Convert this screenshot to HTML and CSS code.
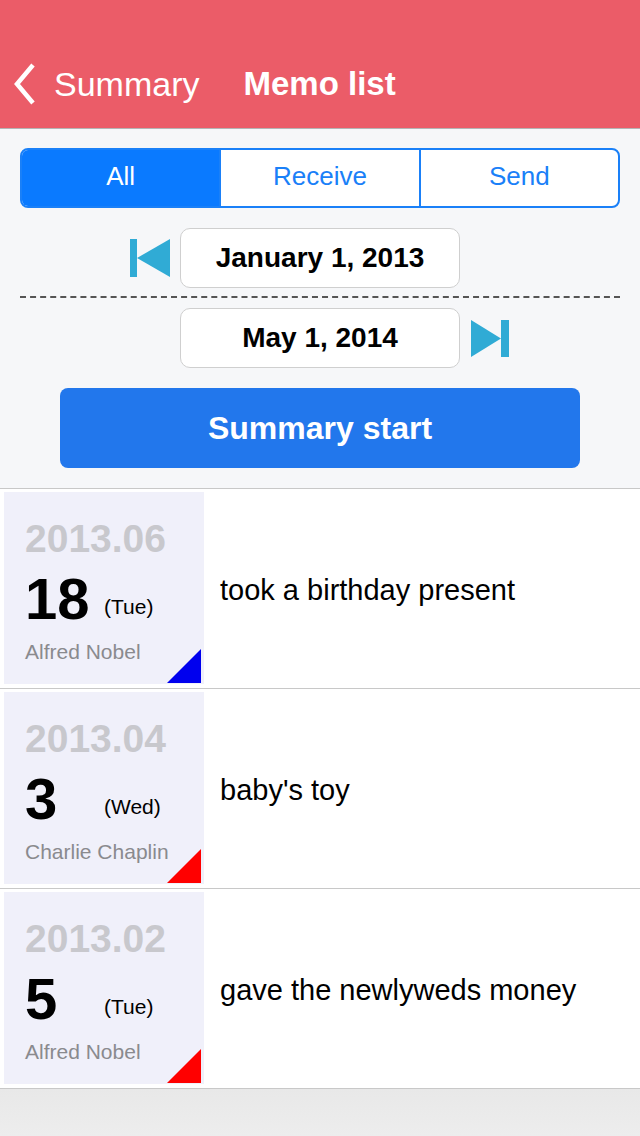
FILE: index.html
```html
<!DOCTYPE html>
<html lang="en">
<head>
    <meta charset="UTF-8">
    <meta name="viewport" content="width=device-width, initial-scale=1.0">
    <title>Memo list</title>
    <link rel="stylesheet" href="styles.css">
</head>
<body>
    <div class="screen">
        <header class="navbar">
            <div class="back">
                <svg class="chevron" width="22" height="42" viewBox="0 0 22 42">
                    <polyline points="19,2 3,21 19,40" fill="none" stroke="#fff" stroke-width="4.5"/>
                </svg>
                <span>Summary</span>
            </div>
            <h1>Memo list</h1>
        </header>

        <section class="filters">
            <div class="segmented">
                <div class="segment active">All</div>
                <div class="segment">Receive</div>
                <div class="segment">Send</div>
            </div>

            <div class="date-row">
                <svg class="skip" width="40" height="38" viewBox="0 0 40 38">
                    <rect x="0" y="0" width="7" height="38" fill="#30abd5"/>
                    <polygon points="40,0 7,19 40,38" fill="#30abd5"/>
                </svg>
                <div class="date-box">January 1, 2013</div>
                <span></span>
            </div>

            <div class="dashed"></div>

            <div class="date-row">
                <span></span>
                <div class="date-box">May 1, 2014</div>
                <svg class="skip right" width="38" height="37" viewBox="0 0 38 37">
                    <polygon points="0,0 30,18.5 0,37" fill="#30abd5"/>
                    <rect x="30" y="0" width="8" height="37" fill="#30abd5"/>
                </svg>
            </div>

            <button class="start">Summary start</button>
        </section>

        <ul class="memos">
            <li class="memo">
                <div class="card">
                    <div class="month">2013.06</div>
                    <div class="day"><span class="num">18</span><span class="wday">(Tue)</span></div>
                    <div class="who">Alfred Nobel</div>
                    <span class="corner blue"></span>
                </div>
                <div class="text">took a birthday present</div>
            </li>
            <li class="memo">
                <div class="card">
                    <div class="month">2013.04</div>
                    <div class="day"><span class="num">3</span><span class="wday">(Wed)</span></div>
                    <div class="who">Charlie Chaplin</div>
                    <span class="corner red"></span>
                </div>
                <div class="text">baby's toy</div>
            </li>
            <li class="memo">
                <div class="card">
                    <div class="month">2013.02</div>
                    <div class="day"><span class="num">5</span><span class="wday">(Tue)</span></div>
                    <div class="who">Alfred Nobel</div>
                    <span class="corner red"></span>
                </div>
                <div class="text">gave the newlyweds money</div>
            </li>
        </ul>
        <div class="footer"></div>
    </div>
</body>
</html>
```

FILE: styles.css
```css
body {
    margin: 0;
    font-family: 'Liberation Sans', Arial, sans-serif;
    background: #ececec;
}
.screen {
    width: 640px;
    height: 1136px;
    display: flex;
    flex-direction: column;
    overflow: hidden;
}
.navbar {
    height: 88px;
    padding-top: 40px;
    background-color: #eb5c68;
    border-bottom: 1px solid #b4b4b4;
    display: flex;
    align-items: center;
    color: #fff;
}
.back {
    display: flex;
    align-items: center;
    font-size: 34px;
    margin-left: 14px;
}
.chevron {
    margin-right: 18px;
}
h1 {
    margin: 0 0 0 44px;
    font-size: 33px;
    font-weight: bold;
}
.filters {
    background-color: #f6f7f9;
    padding: 19px 20px 20px;
    display: flex;
    flex-direction: column;
    border-bottom: 1px solid #c8c8c8;
}
.segmented {
    display: flex;
    height: 60px;
    border: 2px solid #1a80f8;
    border-radius: 8px;
    box-sizing: border-box;
    overflow: hidden;
    background: #fff;
}
.segment {
    flex: 1;
    display: flex;
    align-items: center;
    justify-content: center;
    padding-bottom: 3px;
    font-size: 26px;
    color: #1a80f8;
}
.segment + .segment {
    border-left: 2px solid #1a80f8;
}
.segment.active {
    background-color: #0a7aff;
    color: #fff;
}
.date-row {
    display: grid;
    grid-template-columns: 1fr 280px 1fr;
    align-items: center;
    margin-top: 20px;
}
.date-row .skip {
    justify-self: end;
    margin-right: 10px;
}
.date-row .skip.right {
    justify-self: start;
    margin-right: 0;
    margin-left: 11px;
}
.date-box {
    height: 60px;
    box-sizing: border-box;
    border: 1px solid #cfcfcf;
    border-radius: 10px;
    background: #fff;
    display: flex;
    align-items: center;
    justify-content: center;
    font-size: 28px;
    font-weight: bold;
    color: #000;
}
.dashed {
    margin-top: 8px;
    margin-bottom: -10px;
    border-top: 2px dashed #555;
    height: 0;
}
.start {
    margin: 20px 40px 0;
    height: 80px;
    border: none;
    border-radius: 8px;
    background-color: #2277ec;
    color: #fff;
    font-family: inherit;
    font-size: 32px;
    font-weight: bold;
}
.memos {
    list-style: none;
    margin: 0;
    padding: 0;
    background: #fff;
}
.memo {
    height: 200px;
    box-sizing: border-box;
    padding: 3px 4px 4px;
    border-bottom: 1px solid #c8c8c8;
    display: flex;
    align-items: center;
}
.card {
    position: relative;
    width: 200px;
    height: 192px;
    box-sizing: border-box;
    padding: 24px 0 0 21px;
    background-color: #f0f0fa;
    display: flex;
    flex-direction: column;
}
.month {
    font-size: 39px;
    font-weight: bold;
    line-height: 46px;
    color: #c8c8cd;
}
.day {
    margin-top: 5px;
    height: 64px;
    line-height: 64px;
    white-space: nowrap;
}
.num {
    display: inline-block;
    width: 79px;
    font-size: 58px;
    font-weight: bold;
    color: #000;
}
.wday {
    font-size: 21px;
    vertical-align: 5px;
    color: #000;
}
.who {
    margin-top: 9px;
    font-size: 21px;
    color: #8a8a8e;
}
.corner {
    position: absolute;
    right: 3px;
    bottom: 1px;
    width: 34px;
    height: 34px;
    clip-path: polygon(100% 0, 100% 100%, 0 100%);
}
.corner.blue {
    background: #0000ee;
}
.corner.red {
    background: #ff0000;
}
.text {
    margin-left: 16px;
    padding-top: 4px;
    font-size: 29px;
    color: #000;
}
.footer {
    flex: 1;
    background: linear-gradient(#e8e8e8, #ededed);
}
```
